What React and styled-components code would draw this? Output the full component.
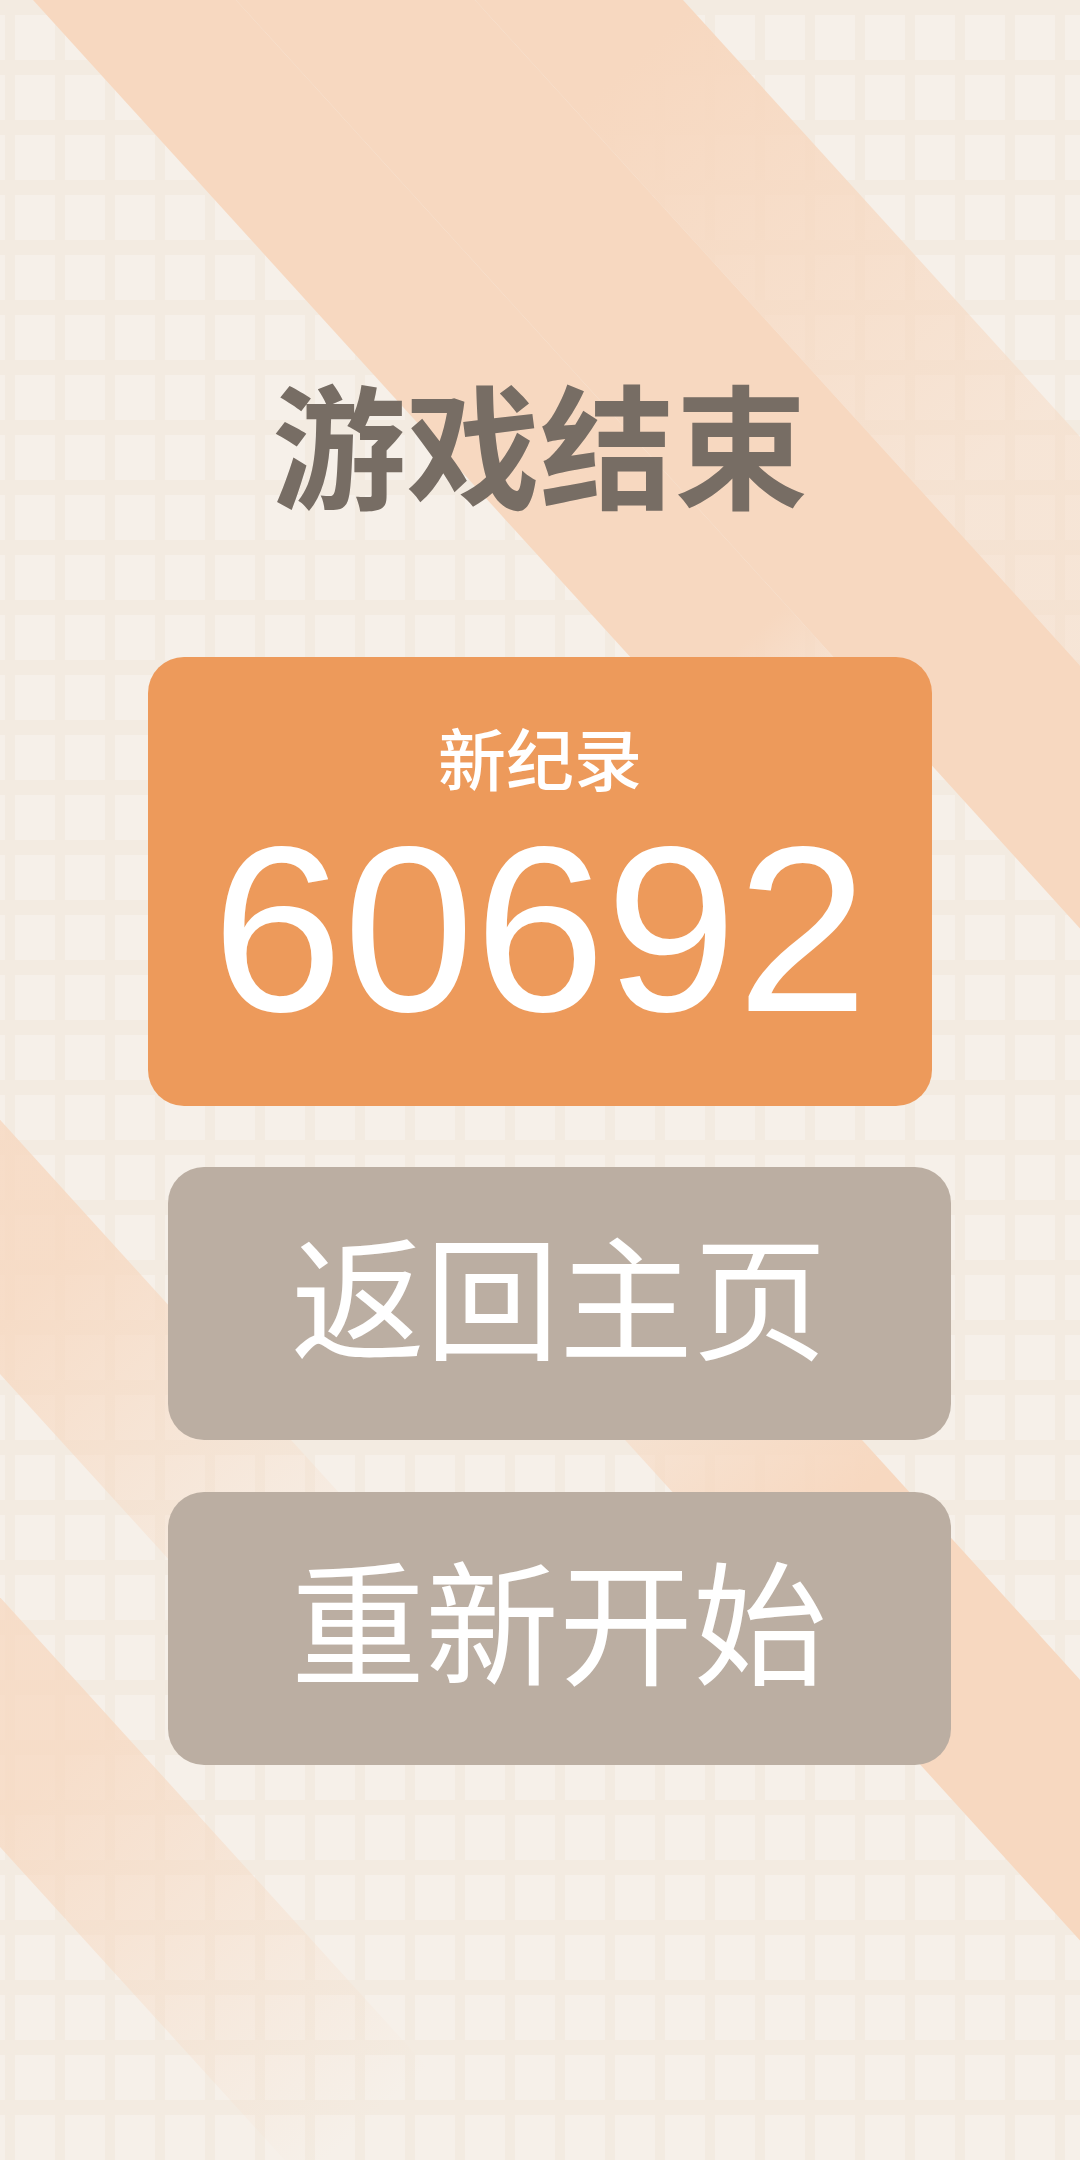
import React from "react";
import styled, { createGlobalStyle } from "styled-components";

const GlobalStyle = createGlobalStyle`
  html, body {
    margin: 0;
    padding: 0;
  }
  body {
    background: #f4ece3;
    font-family: "Noto Sans CJK SC", "Noto Sans", sans-serif;
  }
`;

const Page = styled.div`
  display: grid;
  grid-template: 100% / 100%;
  width: 100%;
  height: 100vh;
  overflow: hidden;
  background-color: #f6f0e9;
  background-image: linear-gradient(90deg, #f3ebe1 0 10px, transparent 10px),
    linear-gradient(180deg, #f3ebe1 0 15px, transparent 15px);
  background-size: 50px 60px;
  background-position: 5px 0, 0 0;
`;

const Backdrop = styled.svg`
  grid-area: 1 / 1;
  display: block;
  width: 100%;
  height: 100%;
`;

const Content = styled.main`
  grid-area: 1 / 1;
  display: flex;
  flex-direction: column;
  align-items: center;
`;

const Title = styled.h1`
  margin: 374px 0 0;
  font-size: 134px;
  line-height: 1;
  font-weight: 700;
  color: #776d64;
`;

const ScoreCard = styled.section`
  box-sizing: border-box;
  width: 784px;
  height: 449px;
  margin-top: 149px;
  padding-top: 66px;
  border-radius: 36px;
  background: #ed9a5b;
  display: flex;
  flex-direction: column;
  align-items: center;
  color: #fff;
`;

const Label = styled.div`
  font-size: 68px;
  line-height: 1;
  font-weight: 500;
`;

const Score = styled.div`
  margin-top: 20px;
  font-family: "Liberation Sans", Arial, sans-serif;
  font-size: 236px;
  line-height: 1;
`;

const ButtonStack = styled.nav`
  display: flex;
  flex-direction: column;
  gap: 52px;
  margin: 61px 0 0 38px;
`;

const Button = styled.button`
  box-sizing: border-box;
  width: 783px;
  height: 273px;
  padding: 0 0 24px;
  border: 0;
  border-radius: 36px;
  background: #bbaea2;
  color: #fff;
  font-family: "Noto Sans CJK SC", "Noto Sans", sans-serif;
  font-size: 134px;
  line-height: 1;
  font-weight: 400;
  display: flex;
  align-items: center;
  justify-content: center;
  cursor: pointer;
`;

// diagonal decorative bands, described by where their edges meet y = 0
const SLOPE = 1.1;
const bands = [
  { id: "a1", a: 33, b: 236, g: [730, 655, 865, 804], o: [1, 0] },
  { id: "a2", a: 236, b: 475, g: [0, 0, 10, 11], o: [1, 1] },
  { id: "a3", a: 475, b: 683, g: [634, 60, 996, 458], o: [1, 0.45] },
  { id: "r", a: -684, b: -447, g: [550, 1227, 822, 1526], o: [0, 1] },
  { id: "l1", a: -1249, b: -1018, g: [35, 1286, 352, 1634], o: [0.8, 0] },
  { id: "l2", a: -1679, b: -1452, g: [48, 1775, 365, 2124], o: [0.75, 0] },
];

const Stripes = () => {
  const run = 2160 / SLOPE;
  return (
    <Backdrop viewBox="0 0 1080 2160" preserveAspectRatio="none" aria-hidden="true">
      <defs>
        {bands.map((band) => (
          <linearGradient
            key={band.id}
            id={`band-${band.id}`}
            gradientUnits="userSpaceOnUse"
            x1={band.g[0]}
            y1={band.g[1]}
            x2={band.g[2]}
            y2={band.g[3]}
          >
            <stop offset="0" stopColor="#f7d8c0" stopOpacity={band.o[0]} />
            <stop offset="1" stopColor="#f7d8c0" stopOpacity={band.o[1]} />
          </linearGradient>
        ))}
      </defs>
      {bands.map((band) => (
        <polygon
          key={band.id}
          fill={`url(#band-${band.id})`}
          points={`${band.a},0 ${band.b},0 ${band.b + run},2160 ${band.a + run},2160`}
        />
      ))}
    </Backdrop>
  );
};

const App = () => {
  return (
    <>
      <GlobalStyle />
      <Page>
        <Stripes />
        <Content>
          <Title>游戏结束</Title>
          <ScoreCard>
            <Label>新纪录</Label>
            <Score>60692</Score>
          </ScoreCard>
          <ButtonStack>
            <Button>返回主页</Button>
            <Button>重新开始</Button>
          </ButtonStack>
        </Content>
      </Page>
    </>
  );
};

export default App;
